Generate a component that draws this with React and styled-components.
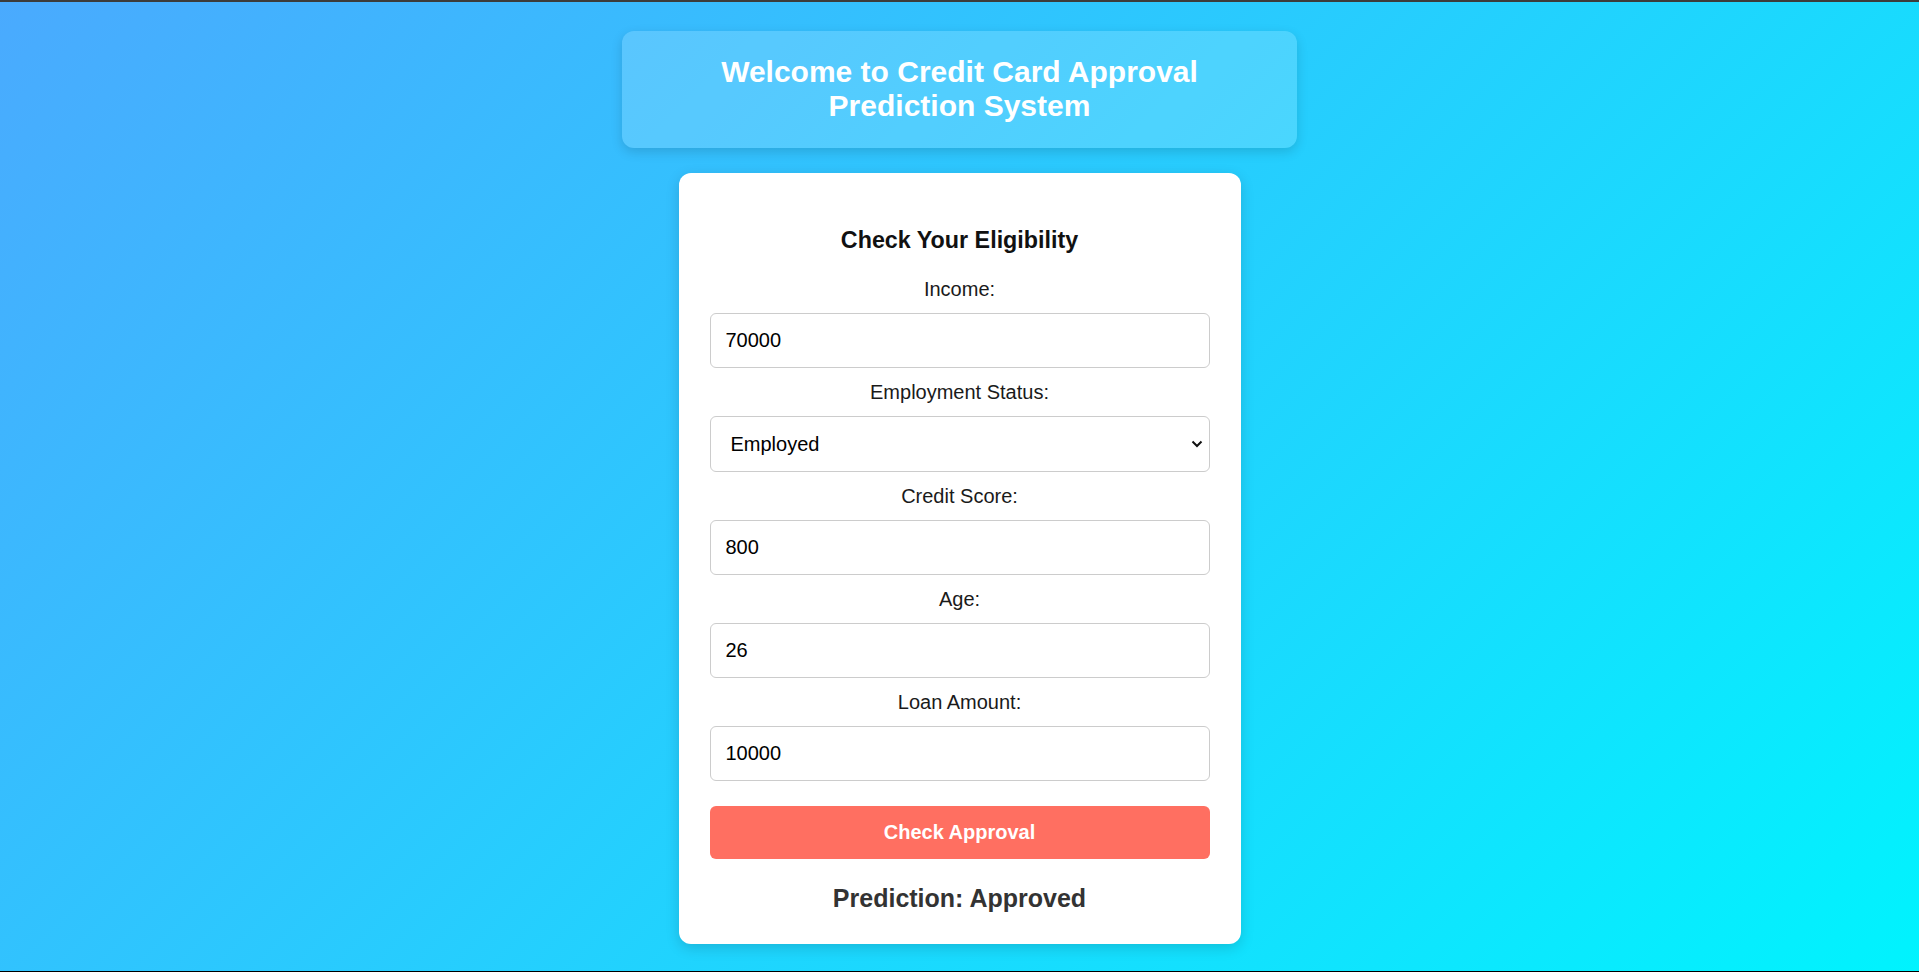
import React, { useState } from 'react';
import styled, { createGlobalStyle } from 'styled-components';

const GlobalStyle = createGlobalStyle`
    * {
        box-sizing: border-box;
    }
    body {
        margin: 0;
        font-family: "Liberation Sans", Arial, Helvetica, sans-serif;
    }
`

const Page = styled.div`
    min-height: 100vh;
    display: flex;
    flex-direction: column;
    align-items: center;
    padding-top: 29px;
    border-top: 2px solid #3c3c3c;
    border-bottom: 1px solid #000;
    background: linear-gradient(135deg, #4aaafe 0%, #00f3fe 100%);
`

const Header = styled.header`
    width: 675px;
    padding: 24px 40px 25px;
    border-radius: 12px;
    background-color: rgba(255, 255, 255, 0.17);
    box-shadow: 0 4px 12px rgba(0, 0, 0, 0.14);
`

const Title = styled.h1`
    margin: 0;
    font-size: 30px;
    font-weight: 700;
    color: #fff;
    text-align: center;
`

const Card = styled.div`
    width: 562px;
    margin-top: 25px;
    padding: 31px;
    border-radius: 12px;
    background-color: #fff;
    box-shadow: 0 4px 14px rgba(0, 0, 0, 0.15);
`

const Form = styled.form`
    display: flex;
    flex-direction: column;
`

const FormTitle = styled.h2`
    margin: 23px 0 11px;
    font-size: 23.3px;
    font-weight: 700;
    color: #111;
    text-align: center;
`

const Label = styled.label`
    display: block;
    margin: 13px 0 12px;
    font-size: 20px;
    color: #1a1a1a;
    text-align: center;
`

const Input = styled.input`
    width: 100%;
    padding: 15px;
    font-family: inherit;
    font-size: 20px;
    color: #000;
    border: 1px solid #ccc;
    border-radius: 6px;
    outline: none;
`

const SelectWrap = styled.div`
    position: relative;
`

const Select = styled.select`
    width: 100%;
    height: 56px;
    padding: 0 40px 0 20px;
    font-family: inherit;
    font-size: 20px;
    color: #000;
    background-color: #fff;
    border: 1px solid #ccc;
    border-radius: 6px;
    outline: none;
    appearance: none;
    -webkit-appearance: none;
`

const Chevron = styled.svg`
    position: absolute;
    top: 50%;
    right: 7px;
    width: 12px;
    height: 8px;
    margin-top: -4px;
    pointer-events: none;
`

const Button = styled.button`
    width: 100%;
    margin-top: 25px;
    padding: 15px;
    font-family: inherit;
    font-size: 20px;
    font-weight: 700;
    color: #fff;
    background-color: #ff6f61;
    border: none;
    border-radius: 6px;
    cursor: pointer;
`

const Result = styled.h3`
    margin: 25px 0 0;
    font-size: 25px;
    font-weight: 700;
    color: #333;
    text-align: center;
`

const fields = [
    { name: 'income', label: 'Income:', value: '70000' },
    { name: 'employment', label: 'Employment Status:', value: 'Employed', select: true },
    { name: 'creditScore', label: 'Credit Score:', value: '800' },
    { name: 'age', label: 'Age:', value: '26' },
    { name: 'loanAmount', label: 'Loan Amount:', value: '10000' },
]

const App = () => {
    const [form, setForm] = useState(
        fields.reduce((acc, f) => ({ ...acc, [f.name]: f.value }), {})
    )

    const handleChange = (e) => {
        setForm({ ...form, [e.target.name]: e.target.value })
    }

    return (
        <Page>
            <GlobalStyle />
            <Header>
                <Title>Welcome to Credit Card Approval Prediction System</Title>
            </Header>
            <Card>
                <Form onSubmit={(e) => e.preventDefault()}>
                    <FormTitle>Check Your Eligibility</FormTitle>
                    {fields.map((f) => (
                        <React.Fragment key={f.name}>
                            <Label htmlFor={f.name}>{f.label}</Label>
                            {f.select ? (
                                <SelectWrap>
                                    <Select id={f.name} name={f.name} value={form[f.name]} onChange={handleChange}>
                                        <option value="Employed">Employed</option>
                                        <option value="Unemployed">Unemployed</option>
                                        <option value="Self-Employed">Self-Employed</option>
                                    </Select>
                                    <Chevron viewBox="0 0 12 8">
                                        <path d="M1.5 1.5 L6 6 L10.5 1.5" fill="none" stroke="#111" strokeWidth="2" />
                                    </Chevron>
                                </SelectWrap>
                            ) : (
                                <Input id={f.name} name={f.name} type="number" value={form[f.name]} onChange={handleChange} />
                            )}
                        </React.Fragment>
                    ))}
                    <Button type="submit">Check Approval</Button>
                    <Result>Prediction: Approved</Result>
                </Form>
            </Card>
        </Page>
    )
}

export default App
